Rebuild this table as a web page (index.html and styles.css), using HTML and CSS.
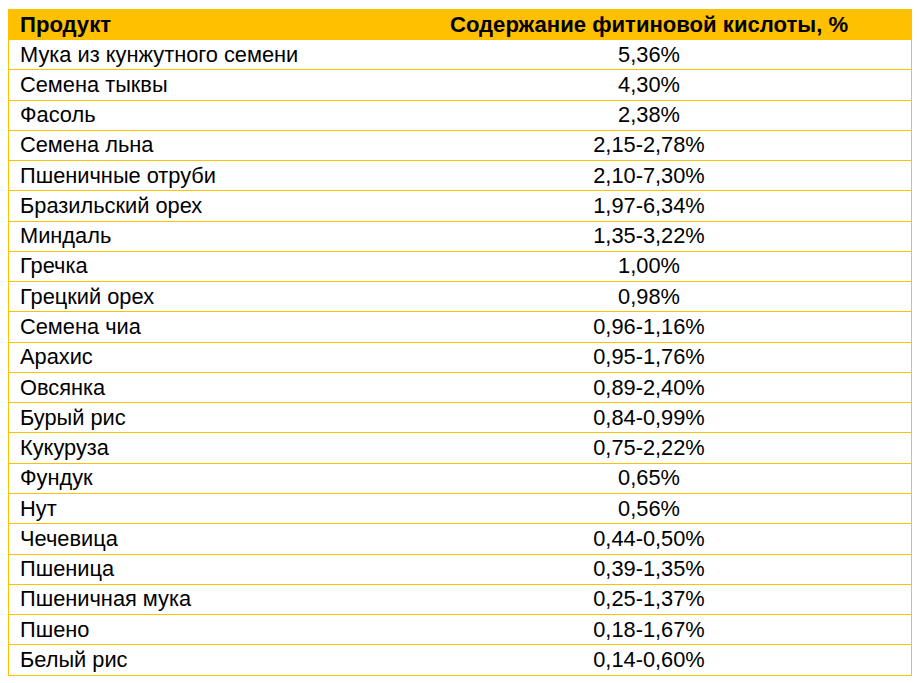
FILE: index.html
```html
<!DOCTYPE html>
<html lang="ru">
<head>
<meta charset="utf-8">
<title>Фитиновая кислота</title>
<link rel="stylesheet" href="styles.css">
</head>
<body>
<table class="phytic">
<thead>
<tr><th class="name">Продукт</th><th class="value">Содержание фитиновой кислоты, %</th></tr>
</thead>
<tbody>
<tr><td class="name">Мука из кунжутного семени</td><td class="value">5,36%</td></tr>
<tr><td class="name">Семена тыквы</td><td class="value">4,30%</td></tr>
<tr><td class="name">Фасоль</td><td class="value">2,38%</td></tr>
<tr><td class="name">Семена льна</td><td class="value">2,15-2,78%</td></tr>
<tr><td class="name">Пшеничные отруби</td><td class="value">2,10-7,30%</td></tr>
<tr><td class="name">Бразильский орех</td><td class="value">1,97-6,34%</td></tr>
<tr><td class="name">Миндаль</td><td class="value">1,35-3,22%</td></tr>
<tr><td class="name">Гречка</td><td class="value">1,00%</td></tr>
<tr><td class="name">Грецкий орех</td><td class="value">0,98%</td></tr>
<tr><td class="name">Семена чиа</td><td class="value">0,96-1,16%</td></tr>
<tr><td class="name">Арахис</td><td class="value">0,95-1,76%</td></tr>
<tr><td class="name">Овсянка</td><td class="value">0,89-2,40%</td></tr>
<tr><td class="name">Бурый рис</td><td class="value">0,84-0,99%</td></tr>
<tr><td class="name">Кукуруза</td><td class="value">0,75-2,22%</td></tr>
<tr><td class="name">Фундук</td><td class="value">0,65%</td></tr>
<tr><td class="name">Нут</td><td class="value">0,56%</td></tr>
<tr><td class="name">Чечевица</td><td class="value">0,44-0,50%</td></tr>
<tr><td class="name">Пшеница</td><td class="value">0,39-1,35%</td></tr>
<tr><td class="name">Пшеничная мука</td><td class="value">0,25-1,37%</td></tr>
<tr><td class="name">Пшено</td><td class="value">0,18-1,67%</td></tr>
<tr><td class="name">Белый рис</td><td class="value">0,14-0,60%</td></tr>
</tbody>
</table>
</body>
</html>
```
FILE: styles.css
```css
html, body {
  margin: 0;
  background: #ffffff;
}
body {
  padding: 9px 8px 0 8px;
  font-family: "Liberation Sans", Arial, sans-serif;
  font-size: 21.8px;
  color: #000000;
}
.phytic {
  width: 904px;
  border-collapse: collapse;
  table-layout: fixed;
}
.phytic th, .phytic td {
  padding: 0;
  border: 1px solid #ffc000;
  border-left: none;
  border-right: none;
  vertical-align: middle;
  white-space: nowrap;
  line-height: 24px;
}
.phytic tr > :first-child { border-left: 1px solid #ffc000; }
.phytic tr > :last-child { border-right: 1px solid #ffc000; }
.phytic thead th {
  background: #ffc000;
  font-weight: bold;
  font-size: 22.1px;
  height: 29px;
}
.phytic tbody td {
  height: 29.27px;
}
.phytic .name {
  width: 367px;
  text-align: left;
  padding-left: 11px;
}
.phytic .value {
  text-align: center;
}
```
